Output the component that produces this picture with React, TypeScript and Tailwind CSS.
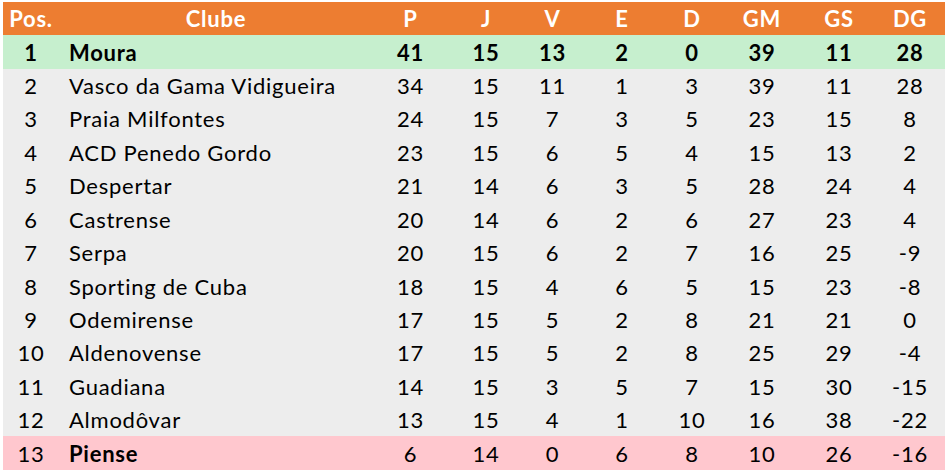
const rows: [number, string, number, number, number, number, number, number, number, number][] = [
  [1, 'Moura', 41, 15, 13, 2, 0, 39, 11, 28],
  [2, 'Vasco da Gama Vidigueira', 34, 15, 11, 1, 3, 39, 11, 28],
  [3, 'Praia Milfontes', 24, 15, 7, 3, 5, 23, 15, 8],
  [4, 'ACD Penedo Gordo', 23, 15, 6, 5, 4, 15, 13, 2],
  [5, 'Despertar', 21, 14, 6, 3, 5, 28, 24, 4],
  [6, 'Castrense', 20, 14, 6, 2, 6, 27, 23, 4],
  [7, 'Serpa', 20, 15, 6, 2, 7, 16, 25, -9],
  [8, 'Sporting de Cuba', 18, 15, 4, 6, 5, 15, 23, -8],
  [9, 'Odemirense', 17, 15, 5, 2, 8, 21, 21, 0],
  [10, 'Aldenovense', 17, 15, 5, 2, 8, 25, 29, -4],
  [11, 'Guadiana', 14, 15, 3, 5, 7, 15, 30, -15],
  [12, 'Almodôvar', 13, 15, 4, 1, 10, 16, 38, -22],
  [13, 'Piense', 6, 14, 0, 6, 8, 10, 26, -16],
]

const cols = 'grid grid-cols-[56px_314px_75px_76px_57px_82px_58px_82px_72px_70px] h-[33.43px] items-center'

export default function App() {
  return (
    <div className="min-h-screen bg-white pl-[3px] pt-[2px] font-['Lato',sans-serif] text-[22px] tracking-[0.75px] text-black">
      <div className="w-[942px]">
        <div className={`${cols} bg-[#ed7d31] font-bold text-white`}>
          <span className="text-center">Pos.</span>
          <span className="text-center">Clube</span>
          {['P', 'J', 'V', 'E', 'D', 'GM', 'GS', 'DG'].map((h) => (
            <span key={h} className="text-center">
              {h}
            </span>
          ))}
        </div>

        {rows.map(([pos, club, ...stats]) => {
          const first = pos === 1
          const last = pos === 13
          const bg = first ? 'bg-[#c6efce]' : last ? 'bg-[#ffc7ce]' : 'bg-[#ededed]'

          return (
            <div key={pos} className={`${cols} ${bg} ${first ? 'font-bold' : ''}`}>
              <span className="text-center">{pos}</span>
              <span className={`pl-[10px] ${last ? 'font-bold' : ''}`}>{club}</span>
              {stats.map((value, i) => (
                <span key={i} className="text-center">
                  {value}
                </span>
              ))}
            </div>
          )
        })}
      </div>
    </div>
  )
}
